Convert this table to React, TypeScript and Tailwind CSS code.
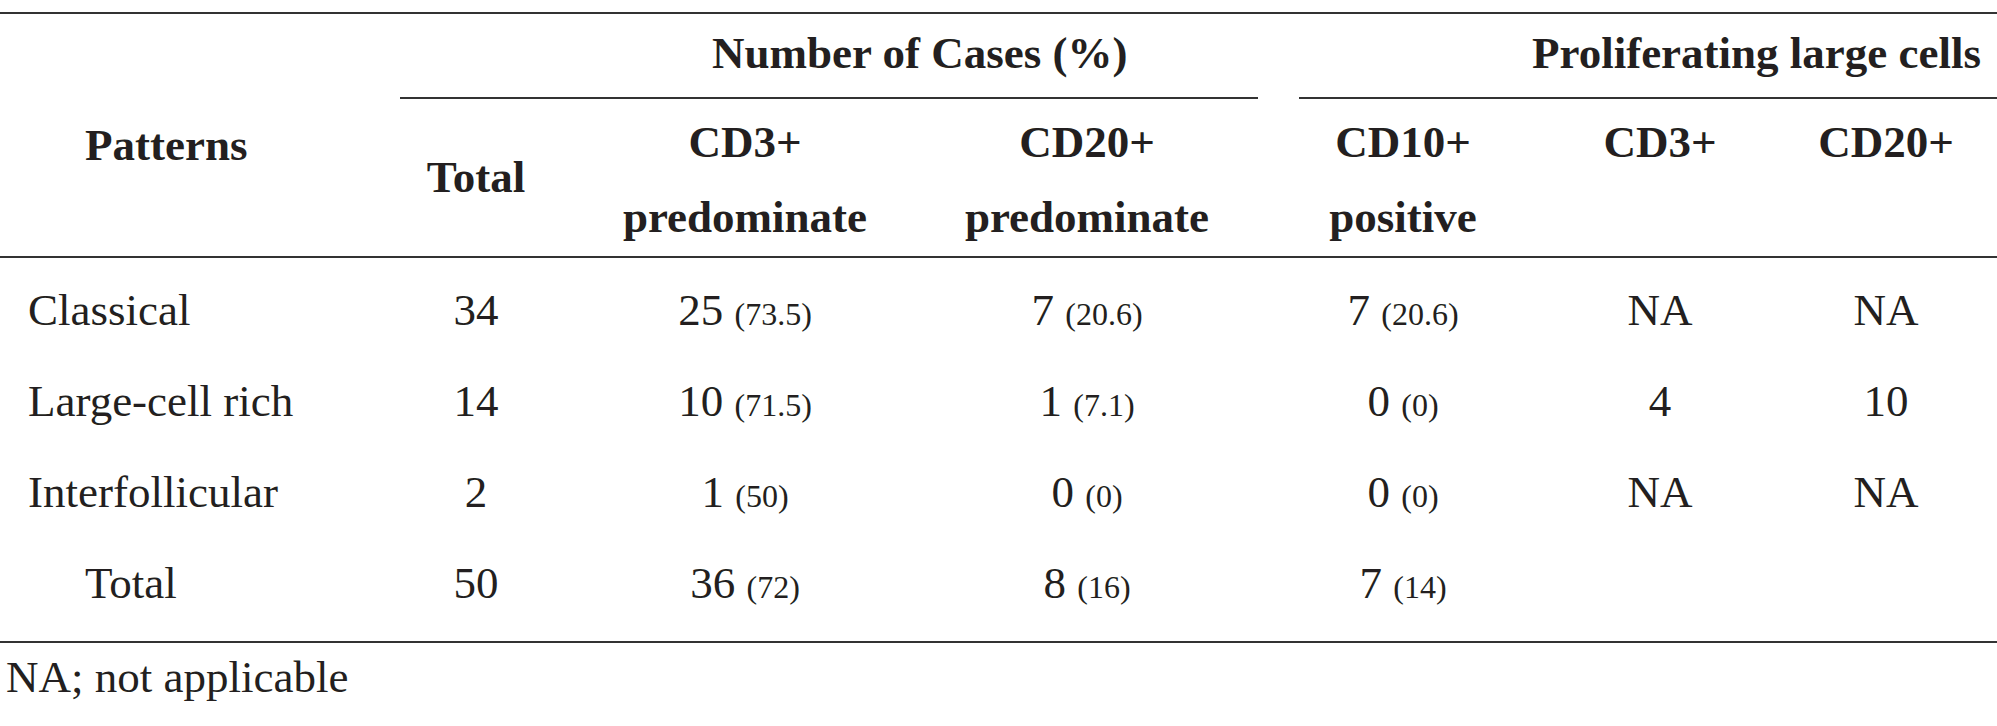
const rows = [
  { label: "Classical", total: "34", cd3: ["25", "73.5"], cd20: ["7", "20.6"], cd10: ["7", "20.6"], pCd3: "NA", pCd20: "NA" },
  { label: "Large-cell rich", total: "14", cd3: ["10", "71.5"], cd20: ["1", "7.1"], cd10: ["0", "0"], pCd3: "4", pCd20: "10" },
  { label: "Interfollicular", total: "2", cd3: ["1", "50"], cd20: ["0", "0"], cd10: ["0", "0"], pCd3: "NA", pCd20: "NA" },
  { label: "Total", total: "50", cd3: ["36", "72"], cd20: ["8", "16"], cd10: ["7", "14"], pCd3: "", pCd20: "", indent: true },
];

const cols = "grid grid-cols-[400px_152px_386px_298px_334px_180px_272px]";

function Count({ value }: { value: string[] }) {
  return (
    <>
      {value[0]} <span className="text-[32px] leading-none">({value[1]})</span>
    </>
  );
}

export default function App() {
  return (
    <div className="w-[1997px] h-[726px] overflow-hidden bg-white font-['Liberation_Serif','Times_New_Roman',serif] text-[45px] text-[#231f20]">
      <div className="w-[2022px] mt-[12px] border-t-2 border-[#333]">
        {/* spanning group headers */}
        <div className="flex font-bold leading-[50px] whitespace-nowrap">
          <div className="w-[400px] border-b-2 border-transparent" />
          <div className="w-[858px] pt-[14px] pb-[19px] pl-[312px] border-b-2 border-[#333]">
            Number of Cases (%)
          </div>
          <div className="w-[41px] border-b-2 border-transparent" />
          <div className="flex-1 pt-[14px] pb-[19px] pl-[233px] border-b-2 border-[#333]">
            Proliferating large cells
          </div>
        </div>

        {/* column headers */}
        <div className={`${cols} h-[159px] font-bold leading-[75px] border-b-2 border-[#333] whitespace-nowrap`}>
          <div className="pt-[9px] pl-[85px]">Patterns</div>
          <div className="flex items-center justify-center">Total</div>
          <div className="pt-[6px] text-center">
            CD3+
            <br />
            predominate
          </div>
          <div className="pt-[6px] text-center">
            CD20+
            <br />
            predominate
          </div>
          <div className="pt-[6px] text-center">
            CD10+
            <br />
            positive
          </div>
          <div className="pt-[6px] text-center">CD3+</div>
          <div className="pt-[6px] text-center">CD20+</div>
        </div>

        {/* body */}
        <div className="pt-[7px] pb-[12px] border-b-2 border-[#333] leading-[91px] whitespace-nowrap">
          {rows.map((r) => (
            <div key={r.label} className={`${cols} h-[91px]`}>
              <div className={r.indent ? "pl-[85px]" : "pl-[28px]"}>{r.label}</div>
              <div className="text-center">{r.total}</div>
              <div className="text-center">
                <Count value={r.cd3} />
              </div>
              <div className="text-center">
                <Count value={r.cd20} />
              </div>
              <div className="text-center">
                <Count value={r.cd10} />
              </div>
              <div className="text-center">{r.pCd3}</div>
              <div className="text-center">{r.pCd20}</div>
            </div>
          ))}
        </div>
      </div>

      <p className="mt-[9px] pl-[6px] leading-[50px]">NA; not applicable</p>
    </div>
  );
}
